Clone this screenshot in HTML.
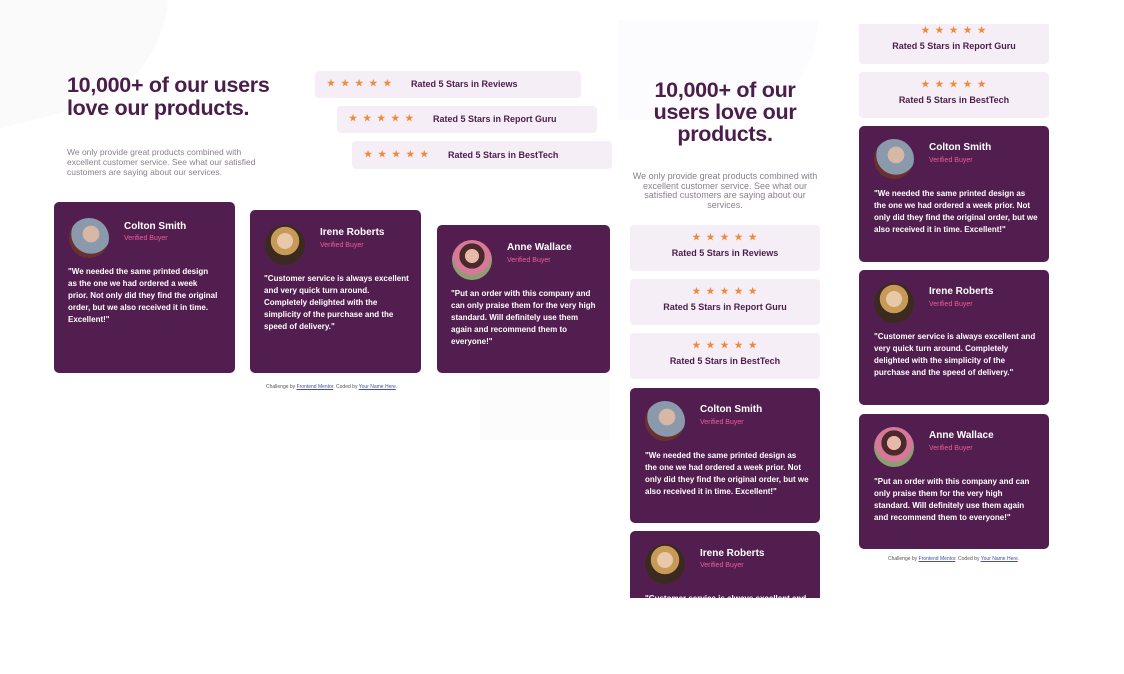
<!DOCTYPE html>
<html><head><meta charset="utf-8"><style>
*{margin:0;padding:0;box-sizing:border-box}
body{width:1124px;height:674px;background:#fff;position:relative;overflow:hidden;font-family:"Liberation Sans",sans-serif}
.a{position:absolute}
.h{color:#4a1d4b;font-weight:bold;letter-spacing:-0.3px}
.p{color:#8a7f8d;font-size:8.5px;line-height:10px}
.box{position:absolute;background:#f6eef6;border-radius:4px;color:#4a1d4b;font-weight:bold;font-size:9px}
.st{color:#ee8b3a;font-size:9px;letter-spacing:6px}
.card{position:absolute;background:#521d4f;border-radius:5px;color:#fff;overflow:hidden}
.av{position:absolute;width:40px;height:40px;border-radius:50%}
.av1{background:radial-gradient(circle at 55% 40%,#d8b8a4 0 25%,#8a9aac 26% 60%,#6a3030 61%)}
.av2{background:radial-gradient(circle at 50% 40%,#e8c8a8 0 25%,#c89a58 26% 45%,#3a2a20 46%)}
.av3{background:radial-gradient(circle at 50% 40%,#e8b8a8 0 22%,#4a2a2a 23% 40%,#d87898 41% 60%,#8aa070 61%)}
.nm{position:absolute;font-size:10px;font-weight:bold}
.vb{position:absolute;font-size:7px;color:#ee5f9b}
.q{position:absolute;font-size:8px;line-height:12px;font-weight:bold}
.ft{position:absolute;font-size:5px;color:#555}
.ft u{color:#3e52a3}
</style></head><body>
<div class="a" style="left:-60px;top:-40px;width:240px;height:150px;background:#fafafb;border-radius:0 0 120px 40px;transform:rotate(-15deg)"></div>
<div class="a" style="left:480px;top:370px;width:130px;height:70px;background:#fcfcfd"></div>

<!-- desktop -->
<div class="a h" style="left:67px;top:74px;font-size:21.5px;line-height:23px">10,000+ of our users<br>love our products.</div>
<div class="a p" style="left:67px;top:147px;width:210px">We only provide great products combined with excellent customer service. See what our satisfied customers are saying about our services.</div>
<div class="box" style="left:315px;top:71px;width:266px;height:27px"><span class="a st" style="left:12px;top:7px">★★★★★</span><span class="a" style="left:96px;top:8px">Rated 5 Stars in Reviews</span></div>
<div class="box" style="left:337px;top:106px;width:260px;height:27px"><span class="a st" style="left:12px;top:7px">★★★★★</span><span class="a" style="left:96px;top:8px">Rated 5 Stars in Report Guru</span></div>
<div class="box" style="left:352px;top:141px;width:260px;height:28px"><span class="a st" style="left:12px;top:8px">★★★★★</span><span class="a" style="left:96px;top:9px">Rated 5 Stars in BestTech</span></div>

<div class="card" style="left:54px;top:202px;width:181px;height:171px"><div class="av av1" style="left:15px;top:16px"></div><div class="nm" style="left:70px;top:19px">Colton Smith</div><div class="vb" style="left:70px;top:33px">Verified Buyer</div><div class="q" style="left:14px;top:64px;width:150px">"We needed the same printed design as the one we had ordered a week prior. Not only did they find the original order, but we also received it in time. Excellent!"</div></div>
<div class="card" style="left:250px;top:210px;width:171px;height:163px"><div class="av av2" style="left:15px;top:15px"></div><div class="nm" style="left:70px;top:17px">Irene Roberts</div><div class="vb" style="left:70px;top:32px">Verified Buyer</div><div class="q" style="left:14px;top:63px;width:145px">"Customer service is always excellent and very quick turn around. Completely delighted with the simplicity of the purchase and the speed of delivery."</div></div>
<div class="card" style="left:437px;top:225px;width:173px;height:148px"><div class="av av3" style="left:15px;top:15px"></div><div class="nm" style="left:70px;top:17px">Anne Wallace</div><div class="vb" style="left:70px;top:32px">Verified Buyer</div><div class="q" style="left:14px;top:63px;width:150px">"Put an order with this company and can only praise them for the very high standard. Will definitely use them again and recommend them to everyone!"</div></div>
<div class="ft" style="left:266px;top:384px">Challenge by <u>Frontend Mentor</u>. Coded by <u>Your Name Here</u>.</div>

<!-- mobile 1 -->
<div class="a" style="left:618px;top:20px;width:200px;height:100px;background:#fcfbfd;border-radius:0 0 160px 0"></div>
<div class="a" style="left:610px;top:0;width:240px;height:598px;overflow:hidden">
<div class="a h" style="left:20px;top:79px;width:190px;text-align:center;font-size:21.5px;line-height:22px">10,000+ of our users love our products.</div>
<div class="a p" style="left:20px;top:172px;width:190px;text-align:center;font-size:9px;line-height:9.5px">We only provide great products combined with excellent customer service. See what our satisfied customers are saying about our services.</div>
<div class="box" style="left:20px;top:225px;width:190px;height:46px;text-align:center"><div class="st" style="margin-top:7px;padding-left:5px">★★★★★</div><div style="margin-top:5px">Rated 5 Stars in Reviews</div></div>
<div class="box" style="left:20px;top:279px;width:190px;height:46px;text-align:center"><div class="st" style="margin-top:7px;padding-left:5px">★★★★★</div><div style="margin-top:5px">Rated 5 Stars in Report Guru</div></div>
<div class="box" style="left:20px;top:333px;width:190px;height:46px;text-align:center"><div class="st" style="margin-top:7px;padding-left:5px">★★★★★</div><div style="margin-top:5px">Rated 5 Stars in BestTech</div></div>
<div class="card" style="left:20px;top:388px;width:190px;height:135px"><div class="av av1" style="left:15px;top:13px"></div><div class="nm" style="left:70px;top:16px">Colton Smith</div><div class="vb" style="left:70px;top:31px">Verified Buyer</div><div class="q" style="left:15px;top:62px;width:165px">"We needed the same printed design as the one we had ordered a week prior. Not only did they find the original order, but we also received it in time. Excellent!"</div></div>
<div class="card" style="left:20px;top:531px;width:190px;height:100px"><div class="av av2" style="left:15px;top:13px"></div><div class="nm" style="left:70px;top:17px">Irene Roberts</div><div class="vb" style="left:70px;top:31px">Verified Buyer</div><div class="q" style="left:15px;top:62px;width:165px">"Customer service is always excellent and</div></div>
</div>

<!-- mobile 2 -->
<div class="a" style="left:849px;top:24px;width:215px;height:574px;overflow:hidden">
<div class="box" style="left:10px;top:-6px;width:190px;height:46px;text-align:center"><div class="st" style="margin-top:7px;padding-left:5px">★★★★★</div><div style="margin-top:5px">Rated 5 Stars in Report Guru</div></div>
<div class="box" style="left:10px;top:48px;width:190px;height:46px;text-align:center"><div class="st" style="margin-top:7px;padding-left:5px">★★★★★</div><div style="margin-top:5px">Rated 5 Stars in BestTech</div></div>
<div class="card" style="left:10px;top:102px;width:190px;height:136px"><div class="av av1" style="left:15px;top:13px"></div><div class="nm" style="left:70px;top:16px">Colton Smith</div><div class="vb" style="left:70px;top:31px">Verified Buyer</div><div class="q" style="left:15px;top:62px;width:165px">"We needed the same printed design as the one we had ordered a week prior. Not only did they find the original order, but we also received it in time. Excellent!"</div></div>
<div class="card" style="left:10px;top:246px;width:190px;height:135px"><div class="av av2" style="left:15px;top:13px"></div><div class="nm" style="left:70px;top:16px">Irene Roberts</div><div class="vb" style="left:70px;top:31px">Verified Buyer</div><div class="q" style="left:15px;top:61px;width:165px">"Customer service is always excellent and very quick turn around. Completely delighted with the simplicity of the purchase and the speed of delivery."</div></div>
<div class="card" style="left:10px;top:390px;width:190px;height:135px"><div class="av av3" style="left:15px;top:13px"></div><div class="nm" style="left:70px;top:16px">Anne Wallace</div><div class="vb" style="left:70px;top:31px">Verified Buyer</div><div class="q" style="left:15px;top:62px;width:165px">"Put an order with this company and can only praise them for the very high standard. Will definitely use them again and recommend them to everyone!"</div></div>
<div class="ft" style="left:39px;top:532px">Challenge by <u>Frontend Mentor</u>. Coded by <u>Your Name Here</u>.</div>
</div>
</body></html>
